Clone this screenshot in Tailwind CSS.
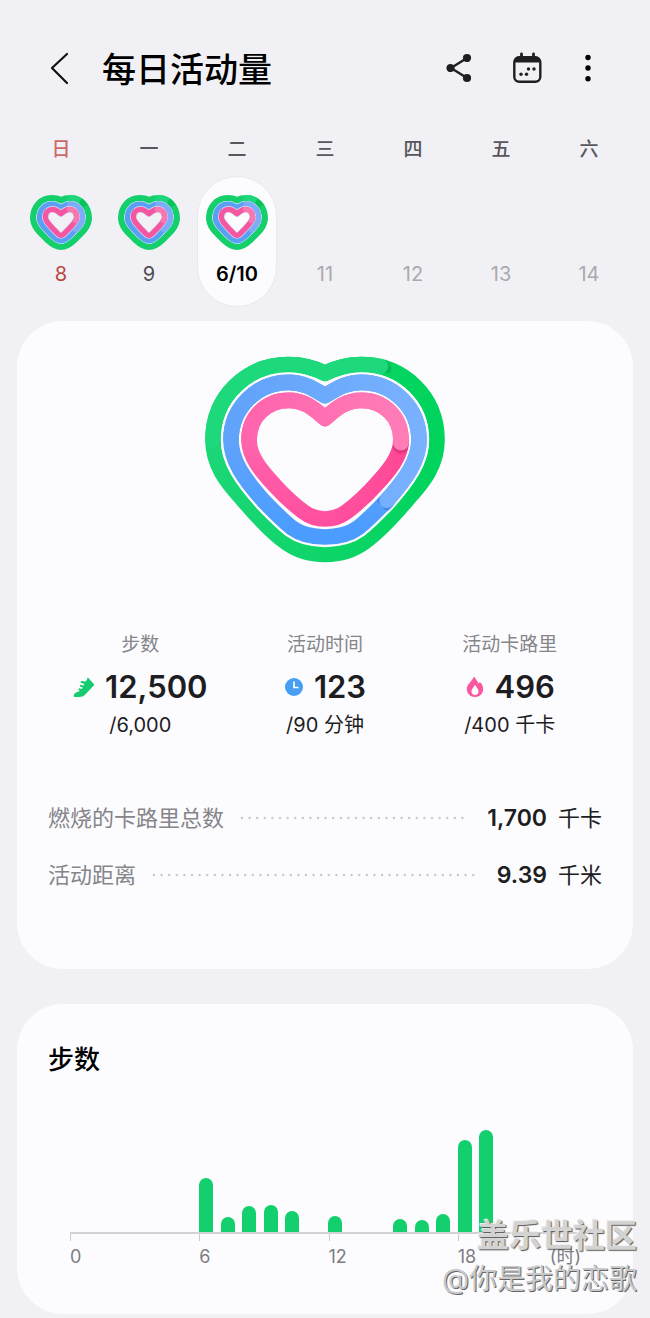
<!DOCTYPE html>
<html lang="zh-CN">
<head>
  <meta charset="UTF-8">
  <title>每日活动量</title>
  <meta name="viewport" content="width=device-width, initial-scale=1.0">
  <script src="https://cdn.jsdelivr.net/npm/@tailwindcss/browser@4"></script>
</head>
<body class="bg-[#f1f1f5] font-['Inter','Noto_Sans_CJK_SC',sans-serif] text-[#1d1d22]">

  <!-- Shared shapes -->
  <svg class="hidden" aria-hidden="true">
    <defs>
      <symbol id="mini-heart" viewBox="90 195 186 165">
        <g fill="none" stroke-linejoin="round" stroke-linecap="round">
          <path d="M100 264C100 230 124 205 154 205C166 205 175 207 183 211C191 207 200 205 212 205C242 205 266 230 266 264C266 290 245 308 222 330C205 346 195 350 183 350C171 350 161 346 144 330C121 308 100 290 100 264Z" stroke="#15cf6b" stroke-width="20"/>
          <path d="M212 205C222 205 230 207 238 213" stroke="#20d67c" stroke-width="20"/>
          <path d="M240 214C246 218 251 223 255 229" stroke="#08c25a" stroke-width="20" stroke-linecap="butt"/>
          <path id="mini-mid" d="M119 264C119 240 134 223 156 223C168 223 176 229 183 233C190 229 198 223 210 223C232 223 247 240 247 264C247 282 228 298 211 315C200 326 193 332 183 332C173 332 166 326 155 315C138 298 119 282 119 264Z" stroke="#bfe6f5" stroke-width="20"/>
          <use href="#mini-mid"/>
          <path d="M119 264C119 240 134 223 156 223C168 223 176 229 183 233C190 229 198 223 210 223C232 223 247 240 247 264C247 282 228 298 211 315C200 326 193 332 183 332C173 332 166 326 155 315C138 298 119 282 119 264Z" stroke="#5b9ff5" stroke-width="17"/>
          <path d="M210 223C232 223 247 240 247 264C247 277 238 288 227 299" stroke="#7eacf8" stroke-width="17"/>
          <path d="M136 262C136 247 146 238 158 238C170 238 177 246 183 251C189 246 196 238 208 238C220 238 230 247 230 262C230 275 215 288 202 301C195 309 190 316 183 316C176 316 171 309 164 301C151 288 136 275 136 262Z" stroke="#d5daf8" stroke-width="20"/>
          <path d="M136 262C136 247 146 238 158 238C170 238 177 246 183 251C189 246 196 238 208 238C220 238 230 247 230 262C230 275 215 288 202 301C195 309 190 316 183 316C176 316 171 309 164 301C151 288 136 275 136 262Z" stroke="#f4569f" stroke-width="16"/>
          <path d="M208 238C220 238 230 247 230 262C230 266 229 269 227 272" stroke="#f777b1" stroke-width="16"/>
        </g>
      </symbol>
    </defs>
  </svg>

  <!-- Header -->
  <header class="flex items-center pt-[46px] pl-[44px] pr-[48px]">
    <button aria-label="返回" class="w-8 h-12 flex items-center justify-center">
      <svg class="w-8 h-12" viewBox="0 0 32 48" fill="none" stroke="#111" stroke-width="2.2" stroke-linecap="round" stroke-linejoin="round"><path d="M23 8L8 22L23 37"/></svg>
    </button>
    <h1 class="ml-[26px] text-[34px] leading-[48px] font-medium text-black">每日活动量</h1>
    <div class="ml-auto flex items-center h-12">
      <button aria-label="分享" class="w-[30px] h-11 mr-[38px]">
        <svg class="w-[30px] h-11" viewBox="0 0 30 44" fill="#1f1f23" stroke="#1f1f23" stroke-width="2.4"><path d="M23 10L7 20L23 30" fill="none"/><circle cx="23" cy="10" r="2.9"/><circle cx="6.500" cy="20" r="2.9"/><circle cx="23" cy="30" r="2.9"/></svg>
      </button>
      <button aria-label="日历" class="w-[30px] h-11 mr-[32px]">
        <svg class="w-[30px] h-11" viewBox="0 0 30 44">
          <path d="M9.500 6V10M21.500 6V10" stroke="#1f1f23" stroke-width="2.8" stroke-linecap="round"/>
          <rect x="2.300" y="9.300" width="26" height="24.500" rx="5" fill="none" stroke="#1f1f23" stroke-width="2.400"/>
          <path d="M2 14.500V13C2 10 4 8.500 7 8.500H23.500C26.500 8.500 28.500 10 28.500 13V14.500Z" fill="#1f1f23"/>
          <g fill="#1f1f23"><circle cx="16.500" cy="21" r="1.700"/><circle cx="22" cy="21" r="1.700"/><circle cx="9" cy="26.200" r="1.700"/><circle cx="14.500" cy="26.200" r="1.700"/></g>
        </svg>
      </button>
      <button aria-label="更多选项" class="w-[28px] h-11">
        <svg class="w-[28px] h-11" viewBox="0 0 28 44" fill="#050505"><circle cx="14" cy="9.500" r="2.700"/><circle cx="14" cy="20" r="2.700"/><circle cx="14" cy="30.700" r="2.700"/></svg>
      </button>
    </div>
  </header>

  <!-- Week -->
  <section class="px-[17px] pt-[42px]">
    <div class="grid grid-cols-7 text-center text-[19px] leading-7 font-medium text-[#57575c]">
      <span class="text-[#cf6868]">日</span><span>一</span><span>二</span><span>三</span><span>四</span><span>五</span><span>六</span>
    </div>
    <div class="grid grid-cols-7 justify-items-center mt-3 text-[20px] leading-6 text-[#a9a9ae]">
      <a href="#" class="w-20 h-[131px] pt-[19px] flex flex-col items-center text-[#b9453f]"><svg class="w-[62px] h-[55px] mb-3"><use href="#mini-heart"/></svg>8</a>
      <a href="#" class="w-20 h-[131px] pt-[19px] flex flex-col items-center text-[#4c4c51]"><svg class="w-[62px] h-[55px] mb-3"><use href="#mini-heart"/></svg>9</a>
      <a href="#" class="w-20 h-[131px] pt-[18px] flex flex-col items-center rounded-full bg-[#fcfcff] border border-[#e9e9ee] font-semibold text-black"><svg class="w-[62px] h-[55px] mb-3"><use href="#mini-heart"/></svg>6/10</a>
      <a href="#" class="pt-[86px]">11</a>
      <a href="#" class="pt-[86px]">12</a>
      <a href="#" class="pt-[86px]">13</a>
      <a href="#" class="pt-[86px]">14</a>
    </div>
  </section>

  <main class="px-[17px]">
    <!-- Summary card -->
    <section class="mt-[14px] rounded-[46px] bg-[#fcfcff] px-[31px] pt-[19px] pb-[78px]">
      <svg class="block mx-auto w-[270px] h-[240px]" viewBox="0 0 810 720" fill="none" stroke-width="47" stroke-linejoin="round" stroke-linecap="round">
        <defs>
          <linearGradient id="green" gradientUnits="userSpaceOnUse" x1="69" y1="0" x2="741" y2="0"><stop stop-color="#1bd676"/><stop offset="1" stop-color="#00d45c"/></linearGradient>
          <linearGradient id="blue" gradientUnits="userSpaceOnUse" x1="0" y1="300" x2="0" y2="591"><stop stop-color="#60a3fa"/><stop offset="1" stop-color="#4a9cff"/></linearGradient>
          <linearGradient id="blue-end" gradientUnits="userSpaceOnUse" x1="123" y1="0" x2="687" y2="0"><stop stop-color="#60a3fa"/><stop offset="1" stop-color="#79b1ff"/></linearGradient>
          <linearGradient id="pink" gradientUnits="userSpaceOnUse" x1="0" y1="300" x2="0" y2="537"><stop stop-color="#ff64ad"/><stop offset="1" stop-color="#ff509f"/></linearGradient>
          <linearGradient id="pink-side" gradientUnits="userSpaceOnUse" x1="405" y1="0" x2="633" y2="0"><stop stop-color="#ff4795" stop-opacity="0"/><stop offset="1" stop-color="#ff4795"/></linearGradient>
          <linearGradient id="pink-end" gradientUnits="userSpaceOnUse" x1="177" y1="0" x2="633" y2="0"><stop stop-color="#ff64ad"/><stop offset="1" stop-color="#ff7cb7"/></linearGradient>
          <filter id="soft" x="-50%" y="-50%" width="200%" height="200%"><feGaussianBlur stdDeviation="5"/></filter>
          <clipPath id="clip-green"><path d="M560 40H650V102L560 99Z"/></clipPath>
          <clipPath id="clip-blue"><path d="M540 440L640 400L640 470L594 517L555 478Z"/></clipPath>
          <clipPath id="clip-pink"><path d="M600 280H657V315L652 350H595L610 315Z"/></clipPath>
        </defs>
        <path d="M69 300C69 170 170 74 296 74C335 74 370 82 405 100C440 82 475 74 514 74C640 74 741 170 741 300C741 375 700 425 655 475C600 540 560 580 525 605C485 635 445 643 405 643C365 643 325 635 285 605C250 580 210 540 155 475C110 425 69 375 69 300Z" stroke="url(#green)"/>
        <g clip-path="url(#clip-green)"><circle cx="578" cy="85" r="24" fill="#008f3c" fill-opacity=".5" filter="url(#soft)"/></g>
        <path d="M69 300C69 170 170 74 296 74C335 74 370 82 405 100C440 82 475 74 514 74C536 74 554 76 571 80" stroke="#1dd97b"/>
        <path d="M123 300C123 205 200 127 296 127C345 127 375 150 405 167C435 150 465 127 514 127C610 127 687 205 687 300C687 360 650 415 587 485C555 518 530 543 505 563C475 585 440 591 405 591C370 591 335 585 305 563C280 543 255 518 223 485C160 415 123 360 123 300Z" stroke="#fcfcff" stroke-width="61"/>
        <path d="M123 300C123 205 200 127 296 127C345 127 375 150 405 167C435 150 465 127 514 127C610 127 687 205 687 300C687 360 650 415 587 485C555 518 530 543 505 563C475 585 440 591 405 591C370 591 335 585 305 563C280 543 255 518 223 485C160 415 123 360 123 300Z" stroke="url(#blue)"/>
        <g clip-path="url(#clip-blue)"><circle cx="588" cy="488" r="24" fill="#1e63c4" fill-opacity=".6" filter="url(#soft)"/></g>
        <path d="M123 300C123 205 200 127 296 127C345 127 375 150 405 167C435 150 465 127 514 127C610 127 687 205 687 300C687 360 650 415 591 481" stroke="url(#blue-end)"/>
        <path d="M177 300C177 230 230 181 296 181C350 181 380 215 405 235C430 215 460 181 514 181C580 181 633 230 633 300C633 350 595 395 555 437C525 470 490 500 470 515C450 530 425 537 405 537C385 537 360 530 340 515C320 500 285 470 255 437C215 395 177 350 177 300Z" stroke="url(#pink)"/>
        <path d="M633 300C633 350 595 395 555 437C525 470 490 500 470 515C450 530 425 537 405 537" stroke="url(#pink-side)" stroke-linecap="butt"/>
        <g clip-path="url(#clip-pink)"><circle cx="633" cy="314" r="24" fill="#b01560" fill-opacity=".6" filter="url(#soft)"/></g>
        <path d="M177 300C177 230 230 181 296 181C350 181 380 215 405 235C430 215 460 181 514 181C580 181 633 230 633 300V308" stroke="url(#pink-end)"/>
      </svg>

      <div class="grid grid-cols-3 mt-[51px] text-center">
        <div>
          <p class="text-[19px] leading-7 text-[#85858a]">步数</p>
          <div class="mt-2 flex items-center justify-center gap-[10px]">
            <svg class="w-[22px] h-[22px]" viewBox="0 0 22 22" fill="#17cc70"><path d="M14.700 1.200L21.300 8.500L20.300 10L12.200 18.600C10.500 20.400 8.600 21 6.400 21H1.800C.8 21 .5 20.200.9 19.100C1.300 17.500 2.500 16.700 4.200 16.100L7 14.900L5.200 13.800L6.100 12.300L8.800 13L9.800 11.500L6.600 10.300L7.300 8.700L11 9.600L11.300 7.900L7.400 6.600L8 5L12.500 5.500C13.800 4.500 14.300 3 14.700 1.200Z"/></svg>
            <strong class="text-[31px] leading-10 font-semibold">12,500</strong>
          </div>
          <p class="mt-0.5 text-[20px] leading-8">/6,000</p>
        </div>
        <div>
          <p class="text-[19px] leading-7 text-[#85858a]">活动时间</p>
          <div class="mt-2 flex items-center justify-center gap-[10px]">
            <svg class="w-5 h-5" viewBox="0 0 20 20"><circle cx="10" cy="10" r="9" fill="#469ff2"/><path d="M10 4.500V10.500H14.500" fill="none" stroke="#fff" stroke-width="1.700"/></svg>
            <strong class="text-[31px] leading-10 font-semibold">123</strong>
          </div>
          <p class="mt-0.5 text-[20px] leading-8">/90 分钟</p>
        </div>
        <div>
          <p class="text-[19px] leading-7 text-[#85858a]">活动卡路里</p>
          <div class="mt-2 flex items-center justify-center gap-[10px]">
            <svg class="w-5 h-[22px]" viewBox="0 0 20 22"><path d="M9.500 1C10.700 3.200 12.300 5 13.600 7.500C14.300 7.200 14.600 6.700 14.900 6.100C17 8 18.200 10.400 18.200 13C18.200 17.600 14.600 21 10 21C5.400 21 1.800 17.600 1.800 13C1.800 8.300 6.800 5.400 8.600 1.300C8.800.8 9.200.6 9.500 1Z" fill="#f9589f"/><path d="M10 8.800C10.900 11.100 13.500 12.700 13.500 15.500C13.500 17.700 12 19 10 19C8 19 6.500 17.700 6.500 15.500C6.500 12.700 9.200 11.100 10 8.800Z" fill="#fff"/></svg>
            <strong class="text-[31px] leading-10 font-semibold">496</strong>
          </div>
          <p class="mt-0.5 text-[20px] leading-8">/400 千卡</p>
        </div>
      </div>

      <dl class="mt-[61px] text-[22px] leading-8">
        <div class="flex items-center mb-[25px]">
          <dt class="text-[#85858a]">燃烧的卡路里总数</dt>
          <svg class="flex-1 h-1 ml-4 mr-5" aria-hidden="true"><line x1="2" y1="2" x2="100%" y2="2" stroke="#c9c9ce" stroke-width="2.500" stroke-linecap="round" stroke-dasharray="0 7.600"/></svg>
          <dd><strong class="text-[23px] font-semibold mr-[11px]">1,700</strong>千卡</dd>
        </div>
        <div class="flex items-center">
          <dt class="text-[#85858a]">活动距离</dt>
          <svg class="flex-1 h-1 ml-4 mr-5" aria-hidden="true"><line x1="2" y1="2" x2="100%" y2="2" stroke="#c9c9ce" stroke-width="2.500" stroke-linecap="round" stroke-dasharray="0 7.600"/></svg>
          <dd><strong class="text-[23px] font-semibold mr-[11px]">9.39</strong>千米</dd>
        </div>
      </dl>
    </section>

    <!-- Hourly steps card -->
    <section class="relative mt-[35px] rounded-[46px] bg-[#fcfcff] pt-[36px] pb-[45px]">
      <h2 class="px-[31px] text-[26px] leading-10 font-medium text-black">步数</h2>
      <div class="ml-[53px] mr-[46px] mt-[50px]">
        <div id="bars" class="grid grid-cols-24 items-end h-[102px]"></div>
        <div class="grid grid-cols-4 border-t-2 border-[#d2d2d6] text-[18px] leading-6 text-[#7d7d82]">
          <div><span class="block w-px h-[7px] bg-[#c9c9ce]"></span><span class="block mt-1">0</span></div>
          <div><span class="block w-px h-[7px] bg-[#c9c9ce]"></span><span class="block mt-1">6</span></div>
          <div><span class="block w-px h-[7px] bg-[#c9c9ce]"></span><span class="block mt-1">12</span></div>
          <div><span class="block w-px h-[7px] bg-[#c9c9ce]"></span><span class="flex justify-between mt-1 pr-[6px]">18<span>(时)</span></span></div>
        </div>
      </div>

      <!-- Community watermark -->
      <div class="absolute -right-1 bottom-[14px] text-right whitespace-nowrap">
        <p class="text-[32px] leading-[44px] font-bold text-[#d3d3d3] [text-shadow:1px_1px_1px_#555,-1px_-1px_0_#eee]">盖乐世社区</p>
        <p class="text-[28px] leading-[42px] text-[#c9c9c9] [text-shadow:1px_1px_0_#666]">@你是我的恋歌</p>
      </div>
    </section>
  </main>

<script>
  // bar height in px for each hour of the day
  const hours = [0, 0, 0, 0, 0, 0, 54, 15, 26, 27, 21, 0, 16, 0, 0, 13, 12, 18, 92, 102, 0, 0, 0, 0];
  document.getElementById('bars').innerHTML = hours
    .map(h => `<div class="w-[14px] rounded-t-full bg-[#14cf6e]" style="height:${h}px"></div>`)
    .join('');
</script>
</body>
</html>
